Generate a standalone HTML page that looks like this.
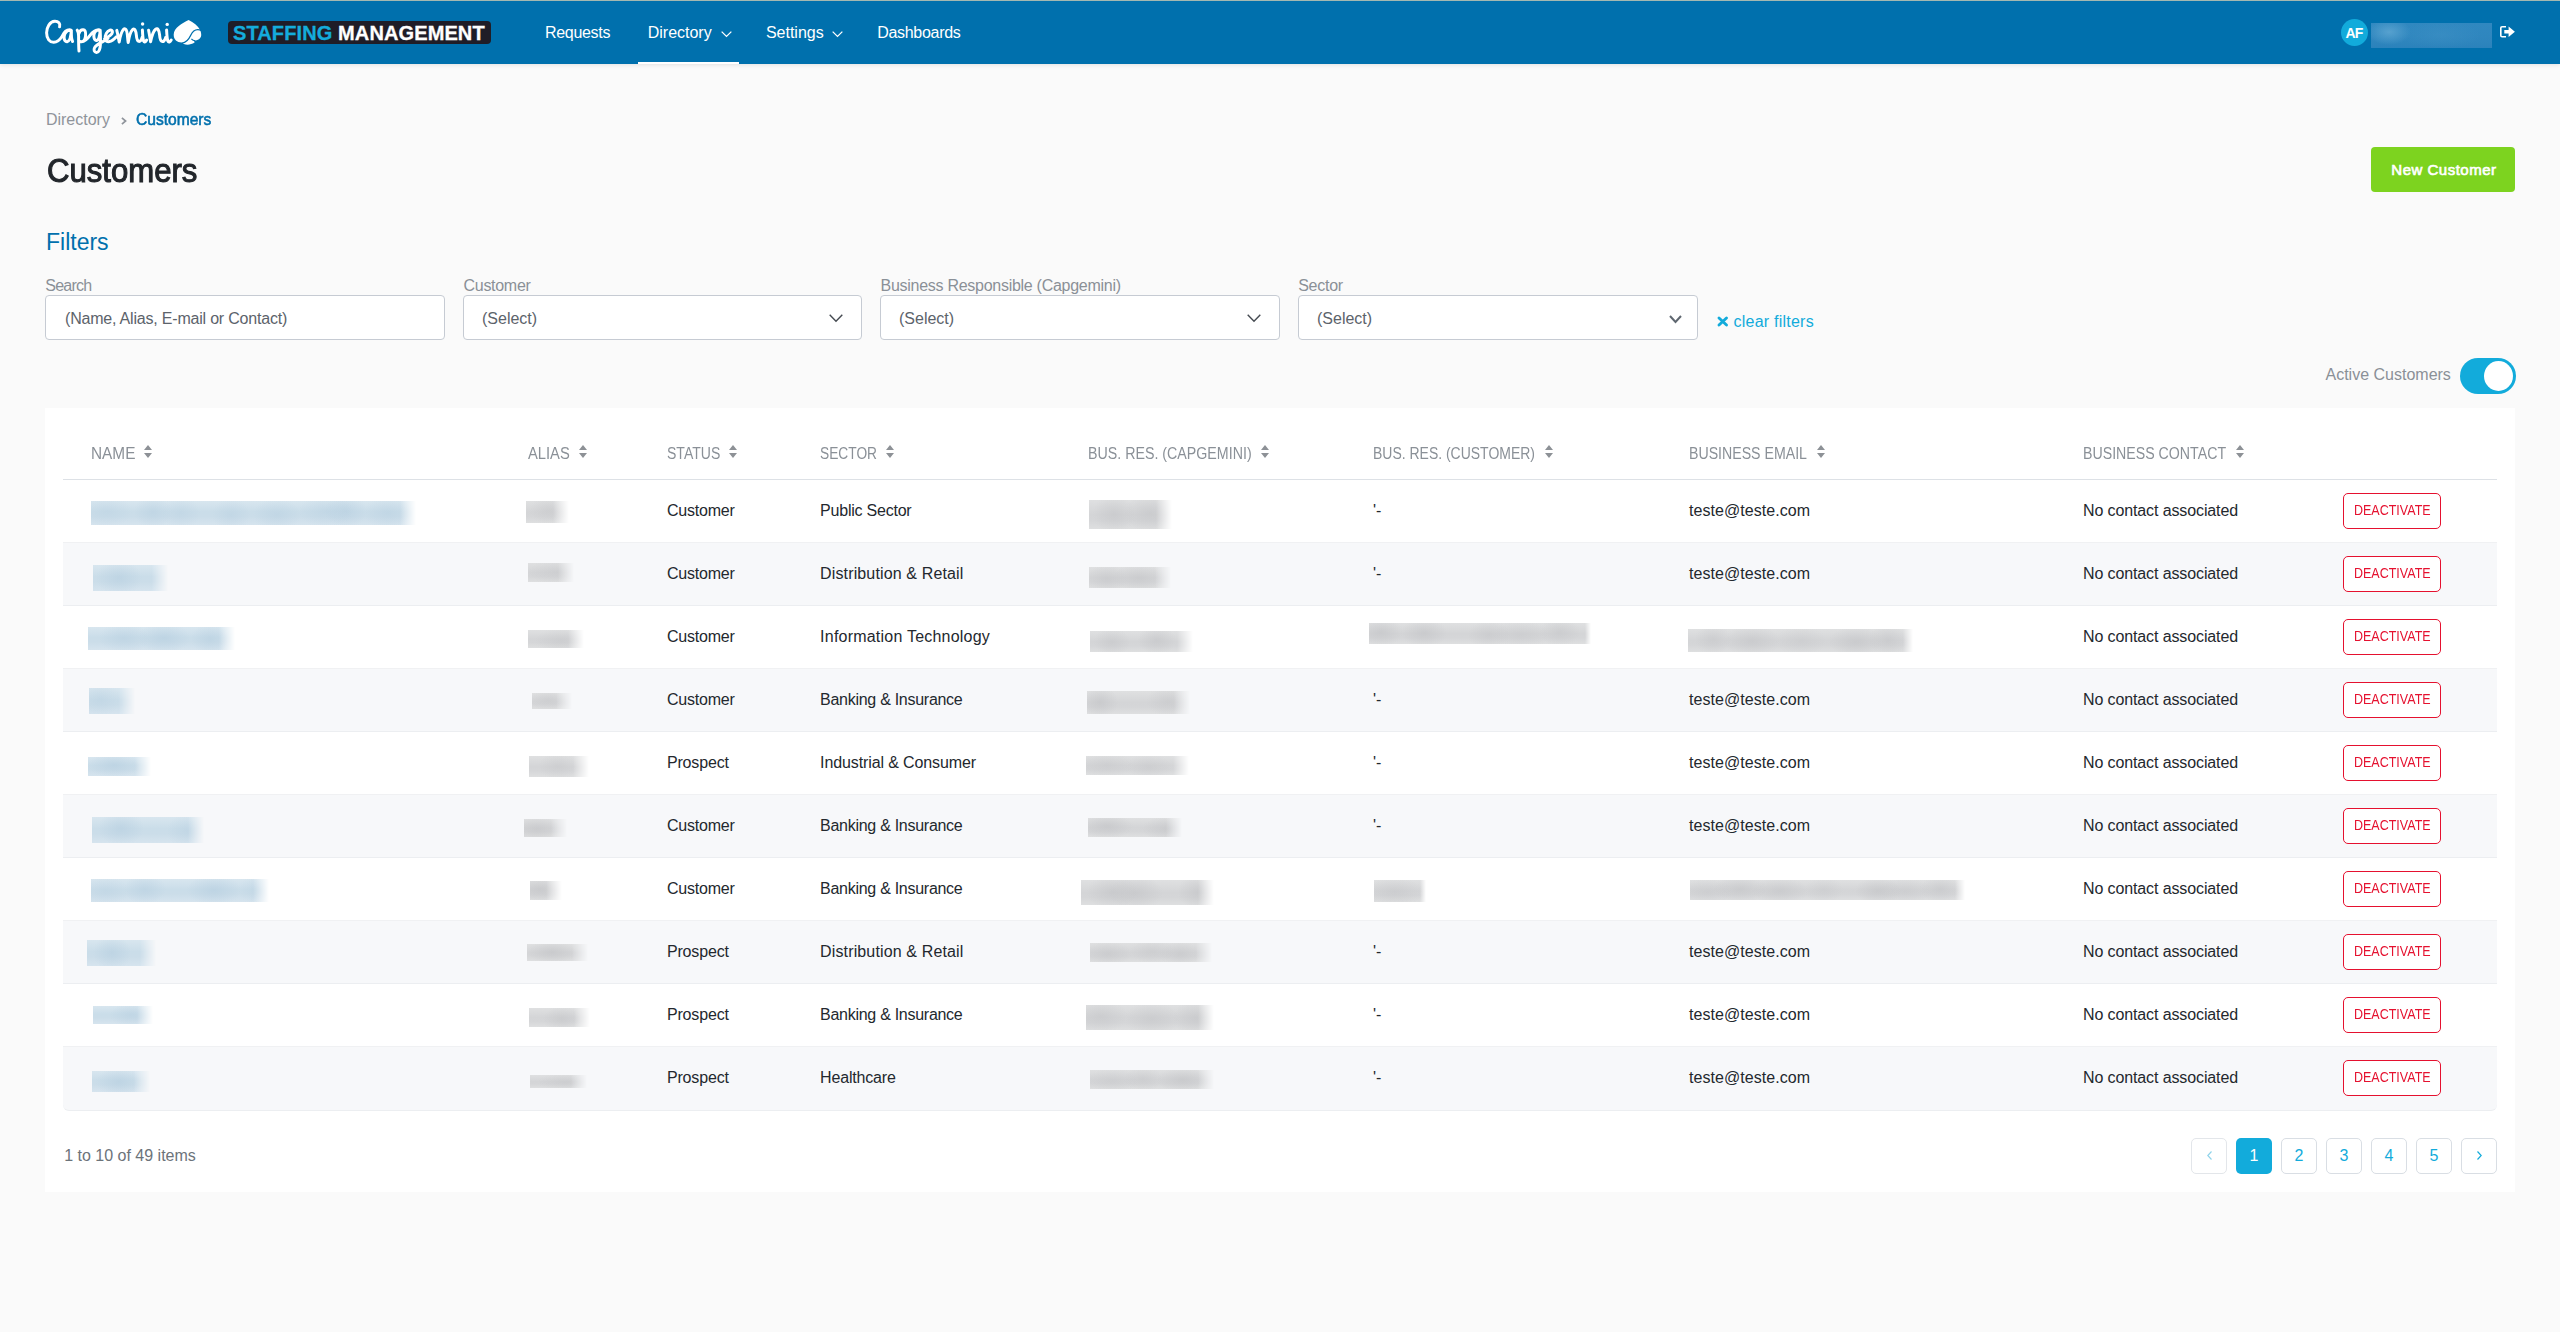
<!DOCTYPE html>
<html><head><meta charset="utf-8"><title>Customers</title>
<style>
html,body{margin:0;padding:0;}
body{width:2560px;height:1332px;overflow:hidden;position:relative;background:#fafafa;font-family:"Liberation Sans",sans-serif;}
.t{position:absolute;white-space:nowrap;}
.pg{text-align:center;}
.r{position:absolute;}
svg.r{overflow:visible;}
</style></head><body>
<div class="r" style="left:0px;top:0px;width:2560px;height:1px;background:#a8bdb6;"></div>
<div class="r" style="left:0px;top:1px;width:2560px;height:63px;background:#0070ad;box-shadow:0 1px 4px rgba(0,0,0,0.10);"></div>
<svg class="r" style="left:40px;top:15px;" width="140" height="45" viewBox="40 15 140 45"><path d="M59.6 26.8 C60.6 23.4 58.4 21.2 54.8 21.3 C49.8 21.6 46.6 27.2 46.6 32.8 C46.6 38.8 49.8 42.4 53.8 42.3 C57.4 42.2 60 39.6 62.2 36.2 M62.2 36.2 C63.8 32.6 66.4 29.8 69.6 29.8 C70.6 29.8 71.2 30.2 71.4 30.6 M70.8 30.4 C67.4 29.6 64.2 33 64.1 37 C64 40.2 65.4 41.9 67.2 41.7 C69.6 41.4 70.8 37.6 71.4 30.4 C71.2 35.2 71.6 39.6 72.6 41.4 M77.2 30.2 C78.2 31.6 78.6 33.4 78.6 36 C78.6 42 78.6 46.8 79 51 M78.6 34.2 C79.6 31.2 81.2 29.6 83.2 29.8 C85.2 30 85.8 32.6 85.6 35.4 C85.4 39 83.6 41.8 81.2 41.8 C80 41.8 79.2 41.4 78.7 40.8 M81.4 41.8 C84.6 41.6 87.8 38.6 90.2 35.2 M99.6 30 C97.8 29.4 95.2 30.4 94.2 33.6 C93.4 36.4 94 40.2 96.2 40.4 C98.4 40.6 99.8 37.4 100.2 30.2 M90.2 35.2 C92.6 31.8 95.6 29.6 99.6 30 M100.2 30.2 C100.4 35 100.6 40 100.4 44.6 C100.2 49.4 98.8 52.6 96.4 52.4 C94.2 52.2 93.4 50 94.6 47.6 C96 45 99 43.4 102.4 41.8 C104.4 40.8 106.4 39.6 108 38.4 M104.6 38.8 C107.6 37.4 111.8 35 112.4 32.4 C112.8 30.6 111.4 29.8 109.8 30.2 C106.8 31 105 35.2 105.2 38.6 C105.4 41 107.2 42 109.4 41.6 C112.2 41.2 114.4 39 116.4 36.8 M116.8 30.4 C117.8 34 118.4 38 119.2 42 C120 37 121.4 31.4 123.6 29.2 C125.6 27.6 127 30.6 127.4 35 C127.6 37.6 127.8 40 128.2 42.4 C129 37.4 130.4 31.6 132.6 29.6 C134.8 27.8 136 31 136.4 35.4 C136.6 38.6 137.2 41 139 41.4 C140.6 41.6 141.6 39.6 142.2 37.2 M142.4 30 C142.6 34 142.8 38.4 143.6 41 C144.4 42.6 145.6 42 146.6 40 M148.6 30.2 C149.4 34 150 38 150.6 41.8 C151.6 36.8 153.2 31 155.6 29.2 C157.8 27.6 159.2 30.6 159.6 35 C159.8 38.4 160.4 41.2 162.4 41.6 C164 41.8 165 39.8 165.8 37.2 M166.6 30 C166.8 34 167 38.4 167.8 41 C168.6 42.8 170 42.2 171.2 40" fill="none" stroke="#fff" stroke-width="3.0" stroke-linecap="round" stroke-linejoin="round"/><circle cx="142.6" cy="24.0" r="1.7" fill="#fff"/><circle cx="167.2" cy="24.4" r="1.7" fill="#fff"/></svg>
<svg class="r" style="left:168px;top:15px;" width="40" height="35" viewBox="0 0 40 35"><path d="M20.6 4.9 C 14 8.5, 6 12.5, 5.7 19.5 C 5.5 25, 9.5 27.6, 14 27.4 L 15.8 29 C 19 30.3, 23 29.8, 26.6 27.6 L 26 25.6 C 30.5 25.8, 33.6 22.6, 33.2 19.2 C 33 17.2, 32.5 15.8, 32.3 15.3 C 29.8 10.2, 25.5 7.2, 20.6 4.9 Z" fill="#fff"/><path d="M33.5 15.6 C 28 13, 25 15.5, 22.6 20.5 C 20.5 25, 18 27.6, 14 28.2" fill="none" stroke="#0070ad" stroke-width="1.3"/><path d="M23.4 23.8 C 24.5 25.2, 25.8 25.7, 27.2 25.8" fill="none" stroke="#0070ad" stroke-width="1.1"/></svg>
<div class="r" style="left:228px;top:21px;width:263px;height:23px;background:#1f1d27;border-radius:4px;"></div>
<div class="t " style="left:233px;top:22.87px;font-size:20px;line-height:20px;color:#fff;font-weight:700;letter-spacing:0.111px;-webkit-text-stroke:0.3px;"><span style="color:#14acdc">STAFFING</span> MANAGEMENT</div>
<div class="t " style="left:545px;top:25.45px;font-size:16px;line-height:16px;color:#fff;letter-spacing:-0.314px;">Requests</div>
<div class="t " style="left:647.7px;top:25.45px;font-size:16px;line-height:16px;color:#fff;">Directory</div>
<div class="t " style="left:765.9px;top:25.45px;font-size:16px;line-height:16px;color:#fff;">Settings</div>
<div class="t " style="left:877.2px;top:25.45px;font-size:16px;line-height:16px;color:#fff;letter-spacing:-0.3px;">Dashboards</div>
<svg class="r" style="left:721px;top:31px;" width="11" height="6" viewBox="0 0 11 6"><polyline points="0.65,0.65 5.5,5.35 10.35,0.65" fill="none" stroke="#fff" stroke-width="1.3"/></svg>
<svg class="r" style="left:832px;top:31px;" width="11" height="6" viewBox="0 0 11 6"><polyline points="0.65,0.65 5.5,5.35 10.35,0.65" fill="none" stroke="#fff" stroke-width="1.3"/></svg>
<div class="r" style="left:638px;top:62px;width:101px;height:2px;background:#fff;"></div>
<div class="r" style="left:2341px;top:19px;width:27px;height:27px;background:#12abdb;border-radius:50%;"></div>
<div class="t " style="left:2345.5px;top:26.45px;font-size:14px;line-height:14px;color:#fff;font-weight:700;letter-spacing:-0.8px;">AF</div>
<div class="r" style="left:2371px;top:23px;width:121px;height:25px;background:radial-gradient(ellipse 22px 13px at 18px 9px,rgba(100,170,212,0.75),rgba(100,170,212,0)),radial-gradient(ellipse 40px 14px at 70px 12px,rgba(70,150,200,0.35),rgba(70,150,200,0)),linear-gradient(180deg,#3088c0 0%,#2f86be 60%,#2b82bb 100%);"></div>
<svg class="r" style="left:2500px;top:26.3px;" width="15" height="11.5" viewBox="0 0 15 11.5"><path d="M6 0.8 H2.1 Q0.8 0.8 0.8 2.1 V9.4 Q0.8 10.7 2.1 10.7 H6" fill="none" stroke="#fff" stroke-width="1.6"/><path d="M4.3 4 H8.6 V0.6 L14.9 5.75 L8.6 10.9 V7.5 H4.3 Z" fill="#fff"/></svg>
<div class="t " style="left:45.9px;top:112.45px;font-size:16px;line-height:16px;color:#8f949b;">Directory</div>
<svg class="r" style="left:120.8px;top:116.8px;" width="5.5" height="8" viewBox="0 0 5.5 8"><polyline points="0.9,0.8 4.6,4 0.9,7.2" fill="none" stroke="#8f949b" stroke-width="1.7"/></svg>
<div class="t " style="left:135.6px;top:112.45px;font-size:16px;line-height:16px;color:#0070ad;-webkit-text-stroke:0.55px #0070ad;transform:scaleX(0.9740);transform-origin:0 0;">Customers</div>
<div class="t " style="left:46.5px;top:152.81px;font-size:34px;line-height:34px;color:#22262b;-webkit-text-stroke:1.1px #22262b;transform:scaleX(0.9146);transform-origin:0 0;">Customers</div>
<div class="r" style="left:2371px;top:147px;width:144px;height:45px;background:#7dd31f;border-radius:4px;"></div>
<div class="t " style="left:2391.3px;top:161.90px;font-size:15px;line-height:15px;color:#fff;letter-spacing:0.5px;-webkit-text-stroke:0.65px #fff;">New Customer</div>
<div class="t " style="left:46px;top:230.53px;font-size:23px;line-height:23px;color:#0070ad;">Filters</div>
<div class="t " style="left:45.3px;top:277.95px;font-size:16px;line-height:16px;color:#8a9097;letter-spacing:-0.76px;">Search</div>
<div class="t " style="left:463.5px;top:277.95px;font-size:16px;line-height:16px;color:#8a9097;letter-spacing:-0.286px;">Customer</div>
<div class="t " style="left:880.5px;top:277.95px;font-size:16px;line-height:16px;color:#8a9097;letter-spacing:-0.274px;">Business Responsible (Capgemini)</div>
<div class="t " style="left:1298.2px;top:277.95px;font-size:16px;line-height:16px;color:#8a9097;letter-spacing:-0.26px;">Sector</div>
<div class="r" style="left:45px;top:295px;width:400px;height:45px;background:#fff;border:1px solid #c6cbd3;border-radius:4px;box-sizing:border-box;"></div>
<div class="r" style="left:463px;top:295px;width:399px;height:45px;background:#fff;border:1px solid #c6cbd3;border-radius:4px;box-sizing:border-box;"></div>
<div class="r" style="left:880px;top:295px;width:400px;height:45px;background:#fff;border:1px solid #c6cbd3;border-radius:4px;box-sizing:border-box;"></div>
<div class="r" style="left:1298px;top:295px;width:400px;height:45px;background:#fff;border:1px solid #c6cbd3;border-radius:4px;box-sizing:border-box;"></div>
<div class="t " style="left:65px;top:311.45px;font-size:16px;line-height:16px;color:#5c636b;letter-spacing:-0.2px;">(Name, Alias, E-mail or Contact)</div>
<div class="t " style="left:482px;top:311.45px;font-size:16px;line-height:16px;color:#5c636b;">(Select)</div>
<svg class="r" style="left:828.5px;top:314px;" width="14" height="8" viewBox="0 0 14 8"><polyline points="0.7,0.7 7.0,7.3 13.3,0.7" fill="none" stroke="#454a51" stroke-width="1.4"/></svg>
<div class="t " style="left:899px;top:311.45px;font-size:16px;line-height:16px;color:#5c636b;">(Select)</div>
<svg class="r" style="left:1246.5px;top:314px;" width="14" height="8" viewBox="0 0 14 8"><polyline points="0.7,0.7 7.0,7.3 13.3,0.7" fill="none" stroke="#454a51" stroke-width="1.4"/></svg>
<div class="t " style="left:1317px;top:311.45px;font-size:16px;line-height:16px;color:#5c636b;">(Select)</div>
<svg class="r" style="left:1669px;top:315px;" width="13" height="8" viewBox="0 0 13 8"><polyline points="1.0,1.0 6.5,7.0 12.0,1.0" fill="none" stroke="#5f6770" stroke-width="2"/></svg>
<svg class="r" style="left:1716.5px;top:316.2px;" width="11.5" height="11" viewBox="0 0 11.5 11"><path d="M2 2 L9.5 9 M9.5 2 L2 9" stroke="#12abdb" stroke-width="2.9" stroke-linecap="round"/></svg>
<div class="t " style="left:1733.5px;top:314.45px;font-size:16px;line-height:16px;color:#12abdb;letter-spacing:0.233px;">clear filters</div>
<div class="t " style="left:2325.5px;top:367.45px;font-size:16px;line-height:16px;color:#8a9097;">Active Customers</div>
<div class="r" style="left:2460px;top:358px;width:56px;height:36px;background:#12abdb;border-radius:18px;"></div>
<div class="r" style="left:2484px;top:361px;width:29px;height:30px;background:#fff;border-radius:50%;"></div>
<div class="r" style="left:45px;top:408px;width:2470px;height:784px;background:#fff;"></div>
<div class="t " style="left:90.7px;top:445.75px;font-size:16px;line-height:16px;color:#8a9097;transform:scaleX(0.9609);transform-origin:0 0;">NAME</div>
<svg class="r" style="left:144px;top:445px;" width="8" height="13" viewBox="0 0 8 13"><path d="M4 0 L8 5 H0 Z M0 8 H8 L4 13 Z" fill="#8d9196"/></svg>
<div class="t " style="left:528.3px;top:445.75px;font-size:16px;line-height:16px;color:#8a9097;transform:scaleX(0.9200);transform-origin:0 0;">ALIAS</div>
<svg class="r" style="left:579px;top:445px;" width="8" height="13" viewBox="0 0 8 13"><path d="M4 0 L8 5 H0 Z M0 8 H8 L4 13 Z" fill="#8d9196"/></svg>
<div class="t " style="left:666.6px;top:445.75px;font-size:16px;line-height:16px;color:#8a9097;transform:scaleX(0.8770);transform-origin:0 0;">STATUS</div>
<svg class="r" style="left:729px;top:445px;" width="8" height="13" viewBox="0 0 8 13"><path d="M4 0 L8 5 H0 Z M0 8 H8 L4 13 Z" fill="#8d9196"/></svg>
<div class="t " style="left:819.7px;top:445.75px;font-size:16px;line-height:16px;color:#8a9097;transform:scaleX(0.8591);transform-origin:0 0;">SECTOR</div>
<svg class="r" style="left:886px;top:445px;" width="8" height="13" viewBox="0 0 8 13"><path d="M4 0 L8 5 H0 Z M0 8 H8 L4 13 Z" fill="#8d9196"/></svg>
<div class="t " style="left:1088.0px;top:445.75px;font-size:16px;line-height:16px;color:#8a9097;transform:scaleX(0.8891);transform-origin:0 0;">BUS. RES. (CAPGEMINI)</div>
<svg class="r" style="left:1261px;top:445px;" width="8" height="13" viewBox="0 0 8 13"><path d="M4 0 L8 5 H0 Z M0 8 H8 L4 13 Z" fill="#8d9196"/></svg>
<div class="t " style="left:1373.0px;top:445.75px;font-size:16px;line-height:16px;color:#8a9097;transform:scaleX(0.8731);transform-origin:0 0;">BUS. RES. (CUSTOMER)</div>
<svg class="r" style="left:1545px;top:445px;" width="8" height="13" viewBox="0 0 8 13"><path d="M4 0 L8 5 H0 Z M0 8 H8 L4 13 Z" fill="#8d9196"/></svg>
<div class="t " style="left:1689.4px;top:445.75px;font-size:16px;line-height:16px;color:#8a9097;transform:scaleX(0.8843);transform-origin:0 0;">BUSINESS EMAIL</div>
<svg class="r" style="left:1817px;top:445px;" width="8" height="13" viewBox="0 0 8 13"><path d="M4 0 L8 5 H0 Z M0 8 H8 L4 13 Z" fill="#8d9196"/></svg>
<div class="t " style="left:2083.0px;top:445.75px;font-size:16px;line-height:16px;color:#8a9097;transform:scaleX(0.8858);transform-origin:0 0;">BUSINESS CONTACT</div>
<svg class="r" style="left:2236px;top:445px;" width="8" height="13" viewBox="0 0 8 13"><path d="M4 0 L8 5 H0 Z M0 8 H8 L4 13 Z" fill="#8d9196"/></svg>
<div class="r" style="left:63px;top:479px;width:2434px;height:1px;background:#dde1e6;"></div>
<div class="t " style="left:666.9px;top:503.45px;font-size:16px;line-height:16px;color:#23282e;letter-spacing:-0.2px;">Customer</div>
<div class="t " style="left:820.1px;top:503.45px;font-size:16px;line-height:16px;color:#23282e;letter-spacing:-0.225px;">Public Sector</div>
<div class="t " style="left:1373px;top:503.45px;font-size:16px;line-height:16px;color:#23282e;">'-</div>
<div class="t " style="left:1689px;top:503.45px;font-size:16px;line-height:16px;color:#23282e;letter-spacing:0.05px;">teste@teste.com</div>
<div class="t " style="left:2083px;top:503.45px;font-size:16px;line-height:16px;color:#23282e;letter-spacing:-0.115px;">No contact associated</div>
<div class="r" style="left:2343px;top:493px;width:98px;height:36px;border:1.5px solid #e5112f;border-radius:5px;box-sizing:border-box;background:#fff;"></div>
<div class="t " style="left:2353.8px;top:503.15px;font-size:14px;line-height:14px;color:#e5112f;transform:scaleX(0.8930);transform-origin:0 0;">DEACTIVATE</div>
<div class="r" style="left:91px;top:501px;width:325px;height:24px;background:radial-gradient(ellipse 25px 17px at 16px 10px,rgba(180,205,223,0.32),rgba(0,0,0,0)),radial-gradient(ellipse 19px 17px at 62px 11px,rgba(180,205,223,0.43),rgba(0,0,0,0)),radial-gradient(ellipse 19px 17px at 90px 12px,rgba(180,205,223,0.32),rgba(0,0,0,0)),radial-gradient(ellipse 19px 17px at 140px 14px,rgba(180,205,223,0.36),rgba(0,0,0,0)),radial-gradient(ellipse 24px 17px at 186px 14px,rgba(180,205,223,0.40),rgba(0,0,0,0)),radial-gradient(ellipse 27px 17px at 235px 10px,rgba(180,205,223,0.37),rgba(0,0,0,0)),radial-gradient(ellipse 21px 17px at 255px 10px,rgba(180,205,223,0.50),rgba(0,0,0,0)),radial-gradient(ellipse 24px 17px at 297px 12px,rgba(180,205,223,0.39),rgba(0,0,0,0)),linear-gradient(180deg,#d8e6ef 0%,#cadde9 45%,#cbdde9 65%,#d6e4ee 100%);-webkit-mask-image:linear-gradient(90deg,#000 0,#000 calc(100% - 16px),transparent 100%);mask-image:linear-gradient(90deg,#000 0,#000 calc(100% - 16px),transparent 100%);"></div>
<div class="r" style="left:526px;top:501px;width:43px;height:22px;background:radial-gradient(ellipse 19px 15px at 23px 9px,rgba(192,193,196,0.35),rgba(0,0,0,0)),linear-gradient(180deg,#dfe0e1 0%,#d4d5d7 50%,#d5d6d8 70%,#dedfe0 100%);-webkit-mask-image:linear-gradient(90deg,#000 0,#000 calc(100% - 16px),transparent 100%);mask-image:linear-gradient(90deg,#000 0,#000 calc(100% - 16px),transparent 100%);"></div>
<div class="r" style="left:1089px;top:500px;width:83px;height:29px;background:radial-gradient(ellipse 21px 20px at 25px 14px,rgba(192,193,196,0.45),rgba(0,0,0,0)),radial-gradient(ellipse 26px 20px at 61px 13px,rgba(192,193,196,0.47),rgba(0,0,0,0)),linear-gradient(180deg,#dfe0e1 0%,#d4d5d7 50%,#d5d6d8 70%,#dedfe0 100%);-webkit-mask-image:linear-gradient(90deg,#000 0,#000 calc(100% - 16px),transparent 100%);mask-image:linear-gradient(90deg,#000 0,#000 calc(100% - 16px),transparent 100%);"></div>
<div class="r" style="left:63px;top:542px;width:2434px;height:64px;background:#f7f8fa;border-top:1px solid #f0f1f3;border-bottom:1px solid #eceef1;box-sizing:border-box;"></div>
<div class="t " style="left:666.9px;top:566.45px;font-size:16px;line-height:16px;color:#23282e;letter-spacing:-0.2px;">Customer</div>
<div class="t " style="left:820.1px;top:566.45px;font-size:16px;line-height:16px;color:#23282e;letter-spacing:0.135px;">Distribution &amp; Retail</div>
<div class="t " style="left:1373px;top:566.45px;font-size:16px;line-height:16px;color:#23282e;">'-</div>
<div class="t " style="left:1689px;top:566.45px;font-size:16px;line-height:16px;color:#23282e;letter-spacing:0.05px;">teste@teste.com</div>
<div class="t " style="left:2083px;top:566.45px;font-size:16px;line-height:16px;color:#23282e;letter-spacing:-0.115px;">No contact associated</div>
<div class="r" style="left:2343px;top:556px;width:98px;height:36px;border:1.5px solid #e5112f;border-radius:5px;box-sizing:border-box;background:#fff;"></div>
<div class="t " style="left:2353.8px;top:566.15px;font-size:14px;line-height:14px;color:#e5112f;transform:scaleX(0.8930);transform-origin:0 0;">DEACTIVATE</div>
<div class="r" style="left:93px;top:565px;width:75px;height:26px;background:radial-gradient(ellipse 23px 18px at 26px 13px,rgba(180,205,223,0.52),rgba(0,0,0,0)),linear-gradient(180deg,#d8e6ef 0%,#cadde9 45%,#cbdde9 65%,#d6e4ee 100%);-webkit-mask-image:linear-gradient(90deg,#000 0,#000 calc(100% - 16px),transparent 100%);mask-image:linear-gradient(90deg,#000 0,#000 calc(100% - 16px),transparent 100%);"></div>
<div class="r" style="left:528px;top:563px;width:46px;height:19px;background:radial-gradient(ellipse 28px 13px at 29px 9px,rgba(192,193,196,0.33),rgba(0,0,0,0)),linear-gradient(180deg,#dfe0e1 0%,#d4d5d7 50%,#d5d6d8 70%,#dedfe0 100%);-webkit-mask-image:linear-gradient(90deg,#000 0,#000 calc(100% - 16px),transparent 100%);mask-image:linear-gradient(90deg,#000 0,#000 calc(100% - 16px),transparent 100%);"></div>
<div class="r" style="left:1089px;top:567px;width:82px;height:21px;background:radial-gradient(ellipse 20px 15px at 18px 12px,rgba(192,193,196,0.42),rgba(0,0,0,0)),radial-gradient(ellipse 26px 15px at 50px 11px,rgba(192,193,196,0.44),rgba(0,0,0,0)),linear-gradient(180deg,#dfe0e1 0%,#d4d5d7 50%,#d5d6d8 70%,#dedfe0 100%);-webkit-mask-image:linear-gradient(90deg,#000 0,#000 calc(100% - 16px),transparent 100%);mask-image:linear-gradient(90deg,#000 0,#000 calc(100% - 16px),transparent 100%);"></div>
<div class="t " style="left:666.9px;top:629.45px;font-size:16px;line-height:16px;color:#23282e;letter-spacing:-0.2px;">Customer</div>
<div class="t " style="left:820.1px;top:629.45px;font-size:16px;line-height:16px;color:#23282e;letter-spacing:0.219px;">Information Technology</div>
<div class="t " style="left:2083px;top:629.45px;font-size:16px;line-height:16px;color:#23282e;letter-spacing:-0.115px;">No contact associated</div>
<div class="r" style="left:2343px;top:619px;width:98px;height:36px;border:1.5px solid #e5112f;border-radius:5px;box-sizing:border-box;background:#fff;"></div>
<div class="t " style="left:2353.8px;top:629.15px;font-size:14px;line-height:14px;color:#e5112f;transform:scaleX(0.8930);transform-origin:0 0;">DEACTIVATE</div>
<div class="r" style="left:88px;top:627px;width:147px;height:23px;background:radial-gradient(ellipse 25px 16px at 36px 11px,rgba(180,205,223,0.45),rgba(0,0,0,0)),radial-gradient(ellipse 26px 16px at 76px 11px,rgba(180,205,223,0.54),rgba(0,0,0,0)),radial-gradient(ellipse 19px 16px at 122px 12px,rgba(180,205,223,0.48),rgba(0,0,0,0)),linear-gradient(180deg,#d8e6ef 0%,#cadde9 45%,#cbdde9 65%,#d6e4ee 100%);-webkit-mask-image:linear-gradient(90deg,#000 0,#000 calc(100% - 16px),transparent 100%);mask-image:linear-gradient(90deg,#000 0,#000 calc(100% - 16px),transparent 100%);"></div>
<div class="r" style="left:528px;top:630px;width:56px;height:18px;background:radial-gradient(ellipse 26px 13px at 33px 11px,rgba(192,193,196,0.37),rgba(0,0,0,0)),linear-gradient(180deg,#dfe0e1 0%,#d4d5d7 50%,#d5d6d8 70%,#dedfe0 100%);-webkit-mask-image:linear-gradient(90deg,#000 0,#000 calc(100% - 16px),transparent 100%);mask-image:linear-gradient(90deg,#000 0,#000 calc(100% - 16px),transparent 100%);"></div>
<div class="r" style="left:1090px;top:631px;width:103px;height:21px;background:radial-gradient(ellipse 18px 15px at 22px 11px,rgba(192,193,196,0.42),rgba(0,0,0,0)),radial-gradient(ellipse 19px 15px at 67px 9px,rgba(192,193,196,0.49),rgba(0,0,0,0)),linear-gradient(180deg,#dfe0e1 0%,#d4d5d7 50%,#d5d6d8 70%,#dedfe0 100%);-webkit-mask-image:linear-gradient(90deg,#000 0,#000 calc(100% - 16px),transparent 100%);mask-image:linear-gradient(90deg,#000 0,#000 calc(100% - 16px),transparent 100%);"></div>
<div class="r" style="left:1369px;top:623px;width:222px;height:21px;background:radial-gradient(ellipse 22px 15px at 12px 9px,rgba(192,193,196,0.52),rgba(0,0,0,0)),radial-gradient(ellipse 23px 15px at 55px 10px,rgba(192,193,196,0.52),rgba(0,0,0,0)),radial-gradient(ellipse 21px 15px at 120px 12px,rgba(192,193,196,0.40),rgba(0,0,0,0)),radial-gradient(ellipse 28px 15px at 152px 12px,rgba(192,193,196,0.34),rgba(0,0,0,0)),radial-gradient(ellipse 20px 15px at 191px 9px,rgba(192,193,196,0.42),rgba(0,0,0,0)),linear-gradient(180deg,#dfe0e1 0%,#d4d5d7 50%,#d5d6d8 70%,#dedfe0 100%);-webkit-mask-image:linear-gradient(90deg,#000 0,#000 calc(100% - 6px),transparent 100%);mask-image:linear-gradient(90deg,#000 0,#000 calc(100% - 6px),transparent 100%);"></div>
<div class="r" style="left:1688px;top:629px;width:225px;height:23px;background:radial-gradient(ellipse 18px 16px at 25px 10px,rgba(192,193,196,0.40),rgba(0,0,0,0)),radial-gradient(ellipse 28px 16px at 64px 12px,rgba(192,193,196,0.47),rgba(0,0,0,0)),radial-gradient(ellipse 25px 16px at 113px 12px,rgba(192,193,196,0.31),rgba(0,0,0,0)),radial-gradient(ellipse 27px 16px at 168px 13px,rgba(192,193,196,0.50),rgba(0,0,0,0)),radial-gradient(ellipse 19px 16px at 200px 11px,rgba(192,193,196,0.46),rgba(0,0,0,0)),linear-gradient(180deg,#dfe0e1 0%,#d4d5d7 50%,#d5d6d8 70%,#dedfe0 100%);-webkit-mask-image:linear-gradient(90deg,#000 0,#000 calc(100% - 10px),transparent 100%);mask-image:linear-gradient(90deg,#000 0,#000 calc(100% - 10px),transparent 100%);"></div>
<div class="r" style="left:63px;top:668px;width:2434px;height:64px;background:#f7f8fa;border-top:1px solid #f0f1f3;border-bottom:1px solid #eceef1;box-sizing:border-box;"></div>
<div class="t " style="left:666.9px;top:692.45px;font-size:16px;line-height:16px;color:#23282e;letter-spacing:-0.2px;">Customer</div>
<div class="t " style="left:820.1px;top:692.45px;font-size:16px;line-height:16px;color:#23282e;letter-spacing:-0.278px;">Banking &amp; Insurance</div>
<div class="t " style="left:1373px;top:692.45px;font-size:16px;line-height:16px;color:#23282e;">'-</div>
<div class="t " style="left:1689px;top:692.45px;font-size:16px;line-height:16px;color:#23282e;letter-spacing:0.05px;">teste@teste.com</div>
<div class="t " style="left:2083px;top:692.45px;font-size:16px;line-height:16px;color:#23282e;letter-spacing:-0.115px;">No contact associated</div>
<div class="r" style="left:2343px;top:682px;width:98px;height:36px;border:1.5px solid #e5112f;border-radius:5px;box-sizing:border-box;background:#fff;"></div>
<div class="t " style="left:2353.8px;top:692.15px;font-size:14px;line-height:14px;color:#e5112f;transform:scaleX(0.8930);transform-origin:0 0;">DEACTIVATE</div>
<div class="r" style="left:89px;top:688px;width:46px;height:26px;background:radial-gradient(ellipse 20px 18px at 11px 11px,rgba(180,205,223,0.34),rgba(0,0,0,0)),linear-gradient(180deg,#d8e6ef 0%,#cadde9 45%,#cbdde9 65%,#d6e4ee 100%);-webkit-mask-image:linear-gradient(90deg,#000 0,#000 calc(100% - 16px),transparent 100%);mask-image:linear-gradient(90deg,#000 0,#000 calc(100% - 16px),transparent 100%);"></div>
<div class="r" style="left:532px;top:693px;width:40px;height:16px;background:radial-gradient(ellipse 18px 11px at 16px 7px,rgba(192,193,196,0.34),rgba(0,0,0,0)),linear-gradient(180deg,#dfe0e1 0%,#d4d5d7 50%,#d5d6d8 70%,#dedfe0 100%);-webkit-mask-image:linear-gradient(90deg,#000 0,#000 calc(100% - 16px),transparent 100%);mask-image:linear-gradient(90deg,#000 0,#000 calc(100% - 16px),transparent 100%);"></div>
<div class="r" style="left:1087px;top:691px;width:103px;height:23px;background:radial-gradient(ellipse 18px 16px at 13px 11px,rgba(192,193,196,0.52),rgba(0,0,0,0)),radial-gradient(ellipse 21px 16px at 81px 10px,rgba(192,193,196,0.39),rgba(0,0,0,0)),linear-gradient(180deg,#dfe0e1 0%,#d4d5d7 50%,#d5d6d8 70%,#dedfe0 100%);-webkit-mask-image:linear-gradient(90deg,#000 0,#000 calc(100% - 16px),transparent 100%);mask-image:linear-gradient(90deg,#000 0,#000 calc(100% - 16px),transparent 100%);"></div>
<div class="t " style="left:666.9px;top:755.45px;font-size:16px;line-height:16px;color:#23282e;letter-spacing:-0.143px;">Prospect</div>
<div class="t " style="left:820.1px;top:755.45px;font-size:16px;line-height:16px;color:#23282e;letter-spacing:-0.115px;">Industrial &amp; Consumer</div>
<div class="t " style="left:1373px;top:755.45px;font-size:16px;line-height:16px;color:#23282e;">'-</div>
<div class="t " style="left:1689px;top:755.45px;font-size:16px;line-height:16px;color:#23282e;letter-spacing:0.05px;">teste@teste.com</div>
<div class="t " style="left:2083px;top:755.45px;font-size:16px;line-height:16px;color:#23282e;letter-spacing:-0.115px;">No contact associated</div>
<div class="r" style="left:2343px;top:745px;width:98px;height:36px;border:1.5px solid #e5112f;border-radius:5px;box-sizing:border-box;background:#fff;"></div>
<div class="t " style="left:2353.8px;top:755.15px;font-size:14px;line-height:14px;color:#e5112f;transform:scaleX(0.8930);transform-origin:0 0;">DEACTIVATE</div>
<div class="r" style="left:88px;top:757px;width:63px;height:19px;background:radial-gradient(ellipse 26px 13px at 26px 8px,rgba(180,205,223,0.55),rgba(0,0,0,0)),linear-gradient(180deg,#d8e6ef 0%,#cadde9 45%,#cbdde9 65%,#d6e4ee 100%);-webkit-mask-image:linear-gradient(90deg,#000 0,#000 calc(100% - 16px),transparent 100%);mask-image:linear-gradient(90deg,#000 0,#000 calc(100% - 16px),transparent 100%);"></div>
<div class="r" style="left:529px;top:756px;width:60px;height:21px;background:radial-gradient(ellipse 19px 15px at 29px 10px,rgba(192,193,196,0.33),rgba(0,0,0,0)),linear-gradient(180deg,#dfe0e1 0%,#d4d5d7 50%,#d5d6d8 70%,#dedfe0 100%);-webkit-mask-image:linear-gradient(90deg,#000 0,#000 calc(100% - 16px),transparent 100%);mask-image:linear-gradient(90deg,#000 0,#000 calc(100% - 16px),transparent 100%);"></div>
<div class="r" style="left:1086px;top:756px;width:103px;height:19px;background:radial-gradient(ellipse 26px 13px at 21px 9px,rgba(192,193,196,0.34),rgba(0,0,0,0)),radial-gradient(ellipse 23px 13px at 63px 11px,rgba(192,193,196,0.34),rgba(0,0,0,0)),linear-gradient(180deg,#dfe0e1 0%,#d4d5d7 50%,#d5d6d8 70%,#dedfe0 100%);-webkit-mask-image:linear-gradient(90deg,#000 0,#000 calc(100% - 16px),transparent 100%);mask-image:linear-gradient(90deg,#000 0,#000 calc(100% - 16px),transparent 100%);"></div>
<div class="r" style="left:63px;top:794px;width:2434px;height:64px;background:#f7f8fa;border-top:1px solid #f0f1f3;border-bottom:1px solid #eceef1;box-sizing:border-box;"></div>
<div class="t " style="left:666.9px;top:818.45px;font-size:16px;line-height:16px;color:#23282e;letter-spacing:-0.2px;">Customer</div>
<div class="t " style="left:820.1px;top:818.45px;font-size:16px;line-height:16px;color:#23282e;letter-spacing:-0.278px;">Banking &amp; Insurance</div>
<div class="t " style="left:1373px;top:818.45px;font-size:16px;line-height:16px;color:#23282e;">'-</div>
<div class="t " style="left:1689px;top:818.45px;font-size:16px;line-height:16px;color:#23282e;letter-spacing:0.05px;">teste@teste.com</div>
<div class="t " style="left:2083px;top:818.45px;font-size:16px;line-height:16px;color:#23282e;letter-spacing:-0.115px;">No contact associated</div>
<div class="r" style="left:2343px;top:808px;width:98px;height:36px;border:1.5px solid #e5112f;border-radius:5px;box-sizing:border-box;background:#fff;"></div>
<div class="t " style="left:2353.8px;top:818.15px;font-size:14px;line-height:14px;color:#e5112f;transform:scaleX(0.8930);transform-origin:0 0;">DEACTIVATE</div>
<div class="r" style="left:92px;top:817px;width:112px;height:26px;background:radial-gradient(ellipse 23px 18px at 29px 11px,rgba(180,205,223,0.54),rgba(0,0,0,0)),radial-gradient(ellipse 21px 18px at 96px 14px,rgba(180,205,223,0.39),rgba(0,0,0,0)),linear-gradient(180deg,#d8e6ef 0%,#cadde9 45%,#cbdde9 65%,#d6e4ee 100%);-webkit-mask-image:linear-gradient(90deg,#000 0,#000 calc(100% - 16px),transparent 100%);mask-image:linear-gradient(90deg,#000 0,#000 calc(100% - 16px),transparent 100%);"></div>
<div class="r" style="left:524px;top:819px;width:43px;height:18px;background:radial-gradient(ellipse 23px 13px at 13px 10px,rgba(192,193,196,0.49),rgba(0,0,0,0)),linear-gradient(180deg,#dfe0e1 0%,#d4d5d7 50%,#d5d6d8 70%,#dedfe0 100%);-webkit-mask-image:linear-gradient(90deg,#000 0,#000 calc(100% - 16px),transparent 100%);mask-image:linear-gradient(90deg,#000 0,#000 calc(100% - 16px),transparent 100%);"></div>
<div class="r" style="left:1088px;top:818px;width:94px;height:19px;background:radial-gradient(ellipse 26px 13px at 19px 8px,rgba(192,193,196,0.55),rgba(0,0,0,0)),radial-gradient(ellipse 26px 13px at 80px 11px,rgba(192,193,196,0.48),rgba(0,0,0,0)),linear-gradient(180deg,#dfe0e1 0%,#d4d5d7 50%,#d5d6d8 70%,#dedfe0 100%);-webkit-mask-image:linear-gradient(90deg,#000 0,#000 calc(100% - 16px),transparent 100%);mask-image:linear-gradient(90deg,#000 0,#000 calc(100% - 16px),transparent 100%);"></div>
<div class="t " style="left:666.9px;top:881.45px;font-size:16px;line-height:16px;color:#23282e;letter-spacing:-0.2px;">Customer</div>
<div class="t " style="left:820.1px;top:881.45px;font-size:16px;line-height:16px;color:#23282e;letter-spacing:-0.278px;">Banking &amp; Insurance</div>
<div class="t " style="left:2083px;top:881.45px;font-size:16px;line-height:16px;color:#23282e;letter-spacing:-0.115px;">No contact associated</div>
<div class="r" style="left:2343px;top:871px;width:98px;height:36px;border:1.5px solid #e5112f;border-radius:5px;box-sizing:border-box;background:#fff;"></div>
<div class="t " style="left:2353.8px;top:881.15px;font-size:14px;line-height:14px;color:#e5112f;transform:scaleX(0.8930);transform-origin:0 0;">DEACTIVATE</div>
<div class="r" style="left:91px;top:879px;width:178px;height:23px;background:radial-gradient(ellipse 22px 16px at 15px 12px,rgba(180,205,223,0.31),rgba(0,0,0,0)),radial-gradient(ellipse 21px 16px at 54px 10px,rgba(180,205,223,0.47),rgba(0,0,0,0)),radial-gradient(ellipse 27px 16px at 123px 11px,rgba(180,205,223,0.55),rgba(0,0,0,0)),radial-gradient(ellipse 20px 16px at 168px 11px,rgba(180,205,223,0.36),rgba(0,0,0,0)),linear-gradient(180deg,#d8e6ef 0%,#cadde9 45%,#cbdde9 65%,#d6e4ee 100%);-webkit-mask-image:linear-gradient(90deg,#000 0,#000 calc(100% - 16px),transparent 100%);mask-image:linear-gradient(90deg,#000 0,#000 calc(100% - 16px),transparent 100%);"></div>
<div class="r" style="left:530px;top:881px;width:32px;height:19px;background:radial-gradient(ellipse 24px 13px at 10px 8px,rgba(192,193,196,0.53),rgba(0,0,0,0)),linear-gradient(180deg,#dfe0e1 0%,#d4d5d7 50%,#d5d6d8 70%,#dedfe0 100%);-webkit-mask-image:linear-gradient(90deg,#000 0,#000 calc(100% - 16px),transparent 100%);mask-image:linear-gradient(90deg,#000 0,#000 calc(100% - 16px),transparent 100%);"></div>
<div class="r" style="left:1081px;top:880px;width:133px;height:25px;background:radial-gradient(ellipse 25px 18px at 31px 12px,rgba(192,193,196,0.50),rgba(0,0,0,0)),radial-gradient(ellipse 27px 18px at 55px 13px,rgba(192,193,196,0.50),rgba(0,0,0,0)),radial-gradient(ellipse 20px 18px at 117px 12px,rgba(192,193,196,0.50),rgba(0,0,0,0)),linear-gradient(180deg,#dfe0e1 0%,#d4d5d7 50%,#d5d6d8 70%,#dedfe0 100%);-webkit-mask-image:linear-gradient(90deg,#000 0,#000 calc(100% - 16px),transparent 100%);mask-image:linear-gradient(90deg,#000 0,#000 calc(100% - 16px),transparent 100%);"></div>
<div class="r" style="left:1374px;top:880px;width:52px;height:22px;background:radial-gradient(ellipse 28px 15px at 21px 12px,rgba(192,193,196,0.40),rgba(0,0,0,0)),linear-gradient(180deg,#dfe0e1 0%,#d4d5d7 50%,#d5d6d8 70%,#dedfe0 100%);-webkit-mask-image:linear-gradient(90deg,#000 0,#000 calc(100% - 6px),transparent 100%);mask-image:linear-gradient(90deg,#000 0,#000 calc(100% - 6px),transparent 100%);"></div>
<div class="r" style="left:1690px;top:880px;width:275px;height:20px;background:radial-gradient(ellipse 25px 14px at 17px 12px,rgba(192,193,196,0.34),rgba(0,0,0,0)),radial-gradient(ellipse 27px 14px at 50px 9px,rgba(192,193,196,0.50),rgba(0,0,0,0)),radial-gradient(ellipse 28px 14px at 90px 11px,rgba(192,193,196,0.46),rgba(0,0,0,0)),radial-gradient(ellipse 19px 14px at 134px 10px,rgba(192,193,196,0.30),rgba(0,0,0,0)),radial-gradient(ellipse 23px 14px at 188px 11px,rgba(192,193,196,0.53),rgba(0,0,0,0)),radial-gradient(ellipse 26px 14px at 215px 11px,rgba(192,193,196,0.35),rgba(0,0,0,0)),radial-gradient(ellipse 20px 14px at 250px 9px,rgba(192,193,196,0.45),rgba(0,0,0,0)),linear-gradient(180deg,#dfe0e1 0%,#d4d5d7 50%,#d5d6d8 70%,#dedfe0 100%);-webkit-mask-image:linear-gradient(90deg,#000 0,#000 calc(100% - 10px),transparent 100%);mask-image:linear-gradient(90deg,#000 0,#000 calc(100% - 10px),transparent 100%);"></div>
<div class="r" style="left:63px;top:920px;width:2434px;height:64px;background:#f7f8fa;border-top:1px solid #f0f1f3;border-bottom:1px solid #eceef1;box-sizing:border-box;"></div>
<div class="t " style="left:666.9px;top:944.45px;font-size:16px;line-height:16px;color:#23282e;letter-spacing:-0.143px;">Prospect</div>
<div class="t " style="left:820.1px;top:944.45px;font-size:16px;line-height:16px;color:#23282e;letter-spacing:0.135px;">Distribution &amp; Retail</div>
<div class="t " style="left:1373px;top:944.45px;font-size:16px;line-height:16px;color:#23282e;">'-</div>
<div class="t " style="left:1689px;top:944.45px;font-size:16px;line-height:16px;color:#23282e;letter-spacing:0.05px;">teste@teste.com</div>
<div class="t " style="left:2083px;top:944.45px;font-size:16px;line-height:16px;color:#23282e;letter-spacing:-0.115px;">No contact associated</div>
<div class="r" style="left:2343px;top:934px;width:98px;height:36px;border:1.5px solid #e5112f;border-radius:5px;box-sizing:border-box;background:#fff;"></div>
<div class="t " style="left:2353.8px;top:944.15px;font-size:14px;line-height:14px;color:#e5112f;transform:scaleX(0.8930);transform-origin:0 0;">DEACTIVATE</div>
<div class="r" style="left:87px;top:940px;width:69px;height:26px;background:radial-gradient(ellipse 19px 18px at 25px 13px,rgba(180,205,223,0.53),rgba(0,0,0,0)),linear-gradient(180deg,#d8e6ef 0%,#cadde9 45%,#cbdde9 65%,#d6e4ee 100%);-webkit-mask-image:linear-gradient(90deg,#000 0,#000 calc(100% - 16px),transparent 100%);mask-image:linear-gradient(90deg,#000 0,#000 calc(100% - 16px),transparent 100%);"></div>
<div class="r" style="left:527px;top:944px;width:61px;height:17px;background:radial-gradient(ellipse 24px 12px at 25px 8px,rgba(192,193,196,0.53),rgba(0,0,0,0)),linear-gradient(180deg,#dfe0e1 0%,#d4d5d7 50%,#d5d6d8 70%,#dedfe0 100%);-webkit-mask-image:linear-gradient(90deg,#000 0,#000 calc(100% - 16px),transparent 100%);mask-image:linear-gradient(90deg,#000 0,#000 calc(100% - 16px),transparent 100%);"></div>
<div class="r" style="left:1090px;top:943px;width:122px;height:19px;background:radial-gradient(ellipse 23px 13px at 18px 11px,rgba(192,193,196,0.43),rgba(0,0,0,0)),radial-gradient(ellipse 22px 13px at 62px 8px,rgba(192,193,196,0.35),rgba(0,0,0,0)),radial-gradient(ellipse 20px 13px at 90px 11px,rgba(192,193,196,0.42),rgba(0,0,0,0)),linear-gradient(180deg,#dfe0e1 0%,#d4d5d7 50%,#d5d6d8 70%,#dedfe0 100%);-webkit-mask-image:linear-gradient(90deg,#000 0,#000 calc(100% - 16px),transparent 100%);mask-image:linear-gradient(90deg,#000 0,#000 calc(100% - 16px),transparent 100%);"></div>
<div class="t " style="left:666.9px;top:1007.45px;font-size:16px;line-height:16px;color:#23282e;letter-spacing:-0.143px;">Prospect</div>
<div class="t " style="left:820.1px;top:1007.45px;font-size:16px;line-height:16px;color:#23282e;letter-spacing:-0.278px;">Banking &amp; Insurance</div>
<div class="t " style="left:1373px;top:1007.45px;font-size:16px;line-height:16px;color:#23282e;">'-</div>
<div class="t " style="left:1689px;top:1007.45px;font-size:16px;line-height:16px;color:#23282e;letter-spacing:0.05px;">teste@teste.com</div>
<div class="t " style="left:2083px;top:1007.45px;font-size:16px;line-height:16px;color:#23282e;letter-spacing:-0.115px;">No contact associated</div>
<div class="r" style="left:2343px;top:997px;width:98px;height:36px;border:1.5px solid #e5112f;border-radius:5px;box-sizing:border-box;background:#fff;"></div>
<div class="t " style="left:2353.8px;top:1007.15px;font-size:14px;line-height:14px;color:#e5112f;transform:scaleX(0.8930);transform-origin:0 0;">DEACTIVATE</div>
<div class="r" style="left:93px;top:1006px;width:60px;height:18px;background:radial-gradient(ellipse 21px 13px at 38px 9px,rgba(180,205,223,0.43),rgba(0,0,0,0)),linear-gradient(180deg,#d8e6ef 0%,#cadde9 45%,#cbdde9 65%,#d6e4ee 100%);-webkit-mask-image:linear-gradient(90deg,#000 0,#000 calc(100% - 16px),transparent 100%);mask-image:linear-gradient(90deg,#000 0,#000 calc(100% - 16px),transparent 100%);"></div>
<div class="r" style="left:529px;top:1008px;width:61px;height:19px;background:radial-gradient(ellipse 19px 13px at 33px 11px,rgba(192,193,196,0.44),rgba(0,0,0,0)),linear-gradient(180deg,#dfe0e1 0%,#d4d5d7 50%,#d5d6d8 70%,#dedfe0 100%);-webkit-mask-image:linear-gradient(90deg,#000 0,#000 calc(100% - 16px),transparent 100%);mask-image:linear-gradient(90deg,#000 0,#000 calc(100% - 16px),transparent 100%);"></div>
<div class="r" style="left:1086px;top:1005px;width:128px;height:25px;background:radial-gradient(ellipse 26px 18px at 15px 11px,rgba(192,193,196,0.43),rgba(0,0,0,0)),radial-gradient(ellipse 27px 18px at 66px 14px,rgba(192,193,196,0.41),rgba(0,0,0,0)),radial-gradient(ellipse 23px 18px at 110px 13px,rgba(192,193,196,0.47),rgba(0,0,0,0)),linear-gradient(180deg,#dfe0e1 0%,#d4d5d7 50%,#d5d6d8 70%,#dedfe0 100%);-webkit-mask-image:linear-gradient(90deg,#000 0,#000 calc(100% - 16px),transparent 100%);mask-image:linear-gradient(90deg,#000 0,#000 calc(100% - 16px),transparent 100%);"></div>
<div class="r" style="left:63px;top:1046px;width:2434px;height:65px;background:#f7f8fa;border-top:1px solid #f0f1f3;border-bottom:1px solid #eceef1;box-sizing:border-box;border-radius:0 0 6px 6px;"></div>
<div class="t " style="left:666.9px;top:1070.45px;font-size:16px;line-height:16px;color:#23282e;letter-spacing:-0.143px;">Prospect</div>
<div class="t " style="left:820.1px;top:1070.45px;font-size:16px;line-height:16px;color:#23282e;letter-spacing:-0.178px;">Healthcare</div>
<div class="t " style="left:1373px;top:1070.45px;font-size:16px;line-height:16px;color:#23282e;">'-</div>
<div class="t " style="left:1689px;top:1070.45px;font-size:16px;line-height:16px;color:#23282e;letter-spacing:0.05px;">teste@teste.com</div>
<div class="t " style="left:2083px;top:1070.45px;font-size:16px;line-height:16px;color:#23282e;letter-spacing:-0.115px;">No contact associated</div>
<div class="r" style="left:2343px;top:1060px;width:98px;height:36px;border:1.5px solid #e5112f;border-radius:5px;box-sizing:border-box;background:#fff;"></div>
<div class="t " style="left:2353.8px;top:1070.15px;font-size:14px;line-height:14px;color:#e5112f;transform:scaleX(0.8930);transform-origin:0 0;">DEACTIVATE</div>
<div class="r" style="left:92px;top:1071px;width:58px;height:21px;background:radial-gradient(ellipse 23px 15px at 27px 11px,rgba(180,205,223,0.54),rgba(0,0,0,0)),linear-gradient(180deg,#d8e6ef 0%,#cadde9 45%,#cbdde9 65%,#d6e4ee 100%);-webkit-mask-image:linear-gradient(90deg,#000 0,#000 calc(100% - 16px),transparent 100%);mask-image:linear-gradient(90deg,#000 0,#000 calc(100% - 16px),transparent 100%);"></div>
<div class="r" style="left:530px;top:1075px;width:57px;height:13px;background:radial-gradient(ellipse 27px 9px at 35px 7px,rgba(192,193,196,0.36),rgba(0,0,0,0)),linear-gradient(180deg,#dfe0e1 0%,#d4d5d7 50%,#d5d6d8 70%,#dedfe0 100%);-webkit-mask-image:linear-gradient(90deg,#000 0,#000 calc(100% - 16px),transparent 100%);mask-image:linear-gradient(90deg,#000 0,#000 calc(100% - 16px),transparent 100%);"></div>
<div class="r" style="left:1090px;top:1070px;width:124px;height:19px;background:radial-gradient(ellipse 26px 13px at 22px 11px,rgba(192,193,196,0.33),rgba(0,0,0,0)),radial-gradient(ellipse 19px 13px at 53px 9px,rgba(192,193,196,0.36),rgba(0,0,0,0)),radial-gradient(ellipse 26px 13px at 93px 10px,rgba(192,193,196,0.52),rgba(0,0,0,0)),linear-gradient(180deg,#dfe0e1 0%,#d4d5d7 50%,#d5d6d8 70%,#dedfe0 100%);-webkit-mask-image:linear-gradient(90deg,#000 0,#000 calc(100% - 16px),transparent 100%);mask-image:linear-gradient(90deg,#000 0,#000 calc(100% - 16px),transparent 100%);"></div>
<div class="t " style="left:64.2px;top:1148.05px;font-size:16px;line-height:16px;color:#6c737a;">1 to 10 of 49 items</div>
<div class="r" style="left:2191px;top:1138px;width:36px;height:36px;border:1px solid #e3e6ea;border-radius:5px;box-sizing:border-box;background:#fff;"></div>
<svg class="r" style="left:2207px;top:1150.7px;" width="5" height="9" viewBox="0 0 5 9"><polyline points="4.5,0.5 0.8,4.5 4.5,8.5" fill="none" stroke="#8fd3ea" stroke-width="1.15"/></svg>
<div class="r" style="left:2236px;top:1138px;width:36px;height:36px;background:#12abdb;border-radius:5px;"></div>
<div class="t pg" style="left:2236px;top:1138px;width:36px;height:36px;line-height:36px;font-size:16px;color:#fff;">1</div>
<div class="r" style="left:2281px;top:1138px;width:36px;height:36px;border:1px solid #d9dee4;border-radius:5px;box-sizing:border-box;background:#fff;"></div>
<div class="t pg" style="left:2281px;top:1138px;width:36px;height:36px;line-height:36px;font-size:16px;color:#12abdb;">2</div>
<div class="r" style="left:2326px;top:1138px;width:36px;height:36px;border:1px solid #d9dee4;border-radius:5px;box-sizing:border-box;background:#fff;"></div>
<div class="t pg" style="left:2326px;top:1138px;width:36px;height:36px;line-height:36px;font-size:16px;color:#12abdb;">3</div>
<div class="r" style="left:2371px;top:1138px;width:36px;height:36px;border:1px solid #d9dee4;border-radius:5px;box-sizing:border-box;background:#fff;"></div>
<div class="t pg" style="left:2371px;top:1138px;width:36px;height:36px;line-height:36px;font-size:16px;color:#12abdb;">4</div>
<div class="r" style="left:2416px;top:1138px;width:36px;height:36px;border:1px solid #d9dee4;border-radius:5px;box-sizing:border-box;background:#fff;"></div>
<div class="t pg" style="left:2416px;top:1138px;width:36px;height:36px;line-height:36px;font-size:16px;color:#12abdb;">5</div>
<div class="r" style="left:2461px;top:1138px;width:36px;height:36px;border:1px solid #d9dee4;border-radius:5px;box-sizing:border-box;background:#fff;"></div>
<svg class="r" style="left:2476.5px;top:1150.7px;" width="5" height="9" viewBox="0 0 5 9"><polyline points="0.5,0.5 4.2,4.5 0.5,8.5" fill="none" stroke="#12abdb" stroke-width="1.15"/></svg>
</body></html>
